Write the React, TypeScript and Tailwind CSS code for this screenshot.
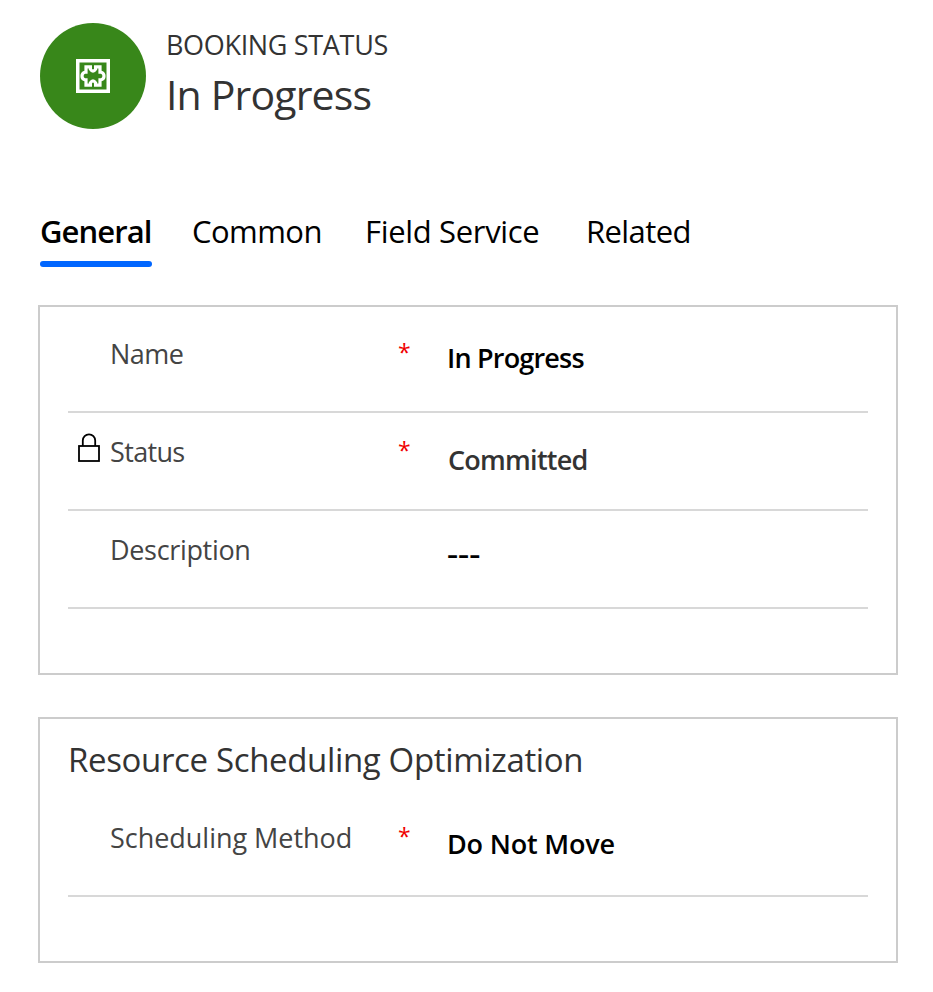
import type { ReactNode } from "react";

const tabs = [
  { label: "Common", className: "ml-[40px] w-[174px] tracking-[-0.55px]" },
  { label: "Field Service", className: "-ml-px w-[221px] tracking-[-0.33px]" },
  { label: "Related", className: "tracking-[-0.6px]" },
];

function PuzzleIcon() {
  return (
    <svg width="34" height="34" viewBox="0 0 34 34" fill="none" stroke="#fff" aria-hidden="true">
      <rect x="1.75" y="1.75" width="30.5" height="30.5" strokeWidth="3.5" />
      <path
        d="M10 7.9H14.4V10.2Q17 14.2 19.6 10.2V7.9H24V13.2H25.2Q28 14 28 17T25.2 20.8H24V26.1H19.6V23.8Q17 19.8 14.4 23.8V26.1H10V20.8H8.8Q6 20 6 17T8.8 13.2H10Z"
        strokeWidth="3.2"
      />
    </svg>
  );
}

function LockIcon() {
  return (
    <svg width="22" height="29" viewBox="0 0 22 29" fill="none" stroke="#000" aria-hidden="true">
      <path d="M4.8 13V7.5a6.2 6.2 0 0 1 12.4 0V13" strokeWidth="1.8" />
      <rect x="1" y="13" width="20" height="15" strokeWidth="1.8" />
    </svg>
  );
}

type RowProps = {
  label: string;
  labelClass: string;
  valueClass: string;
  rowClass: string;
  required?: boolean;
  icon?: ReactNode;
  children: ReactNode;
};

function Row({ label, labelClass, valueClass, rowClass, required, icon, children }: RowProps) {
  return (
    <div className={`flex border-b-2 border-[#d8d8d8] ${rowClass}`}>
      <div className="w-[42px] shrink-0 pl-[10px] pt-[1px]">{icon}</div>
      <div className={`w-[288px] shrink-0 whitespace-nowrap text-[27px] font-[370] leading-10 text-[#444] ${labelClass}`}>{label}</div>
      <div className="-mt-[2px] w-[49px] shrink-0 text-[23px] font-[370] leading-10 text-[#f00000]">{required ? "*" : ""}</div>
      <div className={`whitespace-nowrap text-[27px] font-semibold leading-10 ${valueClass}`}>{children}</div>
    </div>
  );
}

export default function App() {
  return (
    <div className="h-[992px] w-[933px] overflow-hidden bg-white font-['Open_Sans',sans-serif] text-black">
      <header className="flex pl-[40px] pt-[23px]">
        <div className="flex size-[106px] items-center justify-center rounded-full bg-[#38871a]">
          <PuzzleIcon />
        </div>
        <div className="ml-[20px] whitespace-nowrap text-[#333]">
          <div className="pt-[2px] text-[27px] font-[370] leading-10 tracking-[-0.33px]">BOOKING STATUS</div>
          <h1 className="pt-px text-[41px] font-[370] leading-[56px] tracking-[-0.85px]">In Progress</h1>
        </div>
      </header>

      <nav className="mt-[82px] flex whitespace-nowrap pl-[40px] text-[31px] font-[370] leading-10">
        <div className="w-[112px] font-semibold tracking-[-0.9px]">
          General
          <div className="mt-[10px] h-[6px] rounded-full bg-[#0066ff]" />
        </div>
        {tabs.map((tab) => (
          <div key={tab.label} className={tab.className}>{tab.label}</div>
        ))}
      </nav>

      <section className="ml-[38px] mt-[38px] h-[370px] w-[860px] border-2 border-[#ccc] px-[28px]">
        <Row label="Name" required rowClass="h-[106px] pt-[27px]" labelClass="tracking-[-0.5px]" valueClass="pt-[4px] tracking-[-0.8px]">In Progress</Row>
        <Row label="Status" required icon={<LockIcon />} rowClass="h-[98px] pt-[19px]" labelClass="tracking-[-0.65px]" valueClass="pt-[8px] pl-px text-[#333] tracking-[-0.75px]">Committed</Row>
        <Row label="Description" rowClass="h-[98px] pt-[19px]" labelClass="tracking-[-0.33px]" valueClass="pt-[4px]">
          <span className="inline-block origin-left scale-x-[1.28]">---</span>
        </Row>
      </section>

      <section className="ml-[38px] mt-[42px] h-[246px] w-[860px] border-2 border-[#ccc] px-[28px]">
        <h2 className="whitespace-nowrap pt-[21px] text-[33px] font-[370] leading-10 tracking-[-0.35px] text-[#333]">Resource Scheduling Optimization</h2>
        <Row label="Scheduling Method" required rowClass="h-[117px] pt-[38px]" labelClass="tracking-[-0.03px]" valueClass="pt-[6px] tracking-[-0.2px]">Do Not Move</Row>
      </section>
    </div>
  );
}
